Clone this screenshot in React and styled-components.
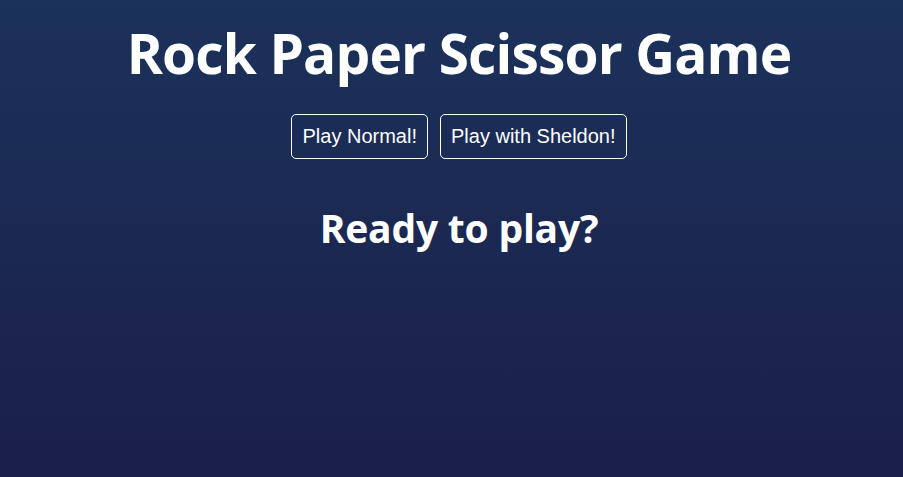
import styled, { createGlobalStyle } from "styled-components";

const GlobalStyle = createGlobalStyle`
  html, body {
    margin: 0;
    padding: 0;
  }

  body {
    min-height: 100vh;
    background: linear-gradient(180deg, #1b325a 0%, #1b1f4a 100%);
    color: #fff;
    font-family: "Open Sans", "Liberation Sans", sans-serif;
  }
`;

const Page = styled.main`
  min-height: 100vh;
  display: flex;
  flex-direction: column;
  align-items: center;
  padding: 16px 0 0 15px;
  box-sizing: border-box;
`;

const Title = styled.h1`
  margin: 0;
  font-size: 55px;
  font-weight: 700;
  line-height: 74px;
  letter-spacing: -0.85px;
`;

const ModeBar = styled.div`
  display: flex;
  gap: 12px;
  margin-top: 24px;
`;

const ModeButton = styled.button`
  height: 45px;
  padding: 0 10px;
  background: transparent;
  color: #fff;
  border: 1px solid #fff;
  border-radius: 5px;
  font-family: "Liberation Sans", Arial, sans-serif;
  font-size: 20px;
  cursor: pointer;
`;

const Status = styled.h2`
  margin: 43px 0 0;
  font-size: 39px;
  font-weight: 700;
  line-height: 52px;
  letter-spacing: -0.2px;
`;

const App = () => {
  return (
    <>
      <GlobalStyle />
      <Page>
        <Title>Rock Paper Scissor Game</Title>
        <ModeBar>
          <ModeButton>Play Normal!</ModeButton>
          <ModeButton>Play with Sheldon!</ModeButton>
        </ModeBar>
        <Status>Ready to play?</Status>
      </Page>
    </>
  );
};

export default App;
